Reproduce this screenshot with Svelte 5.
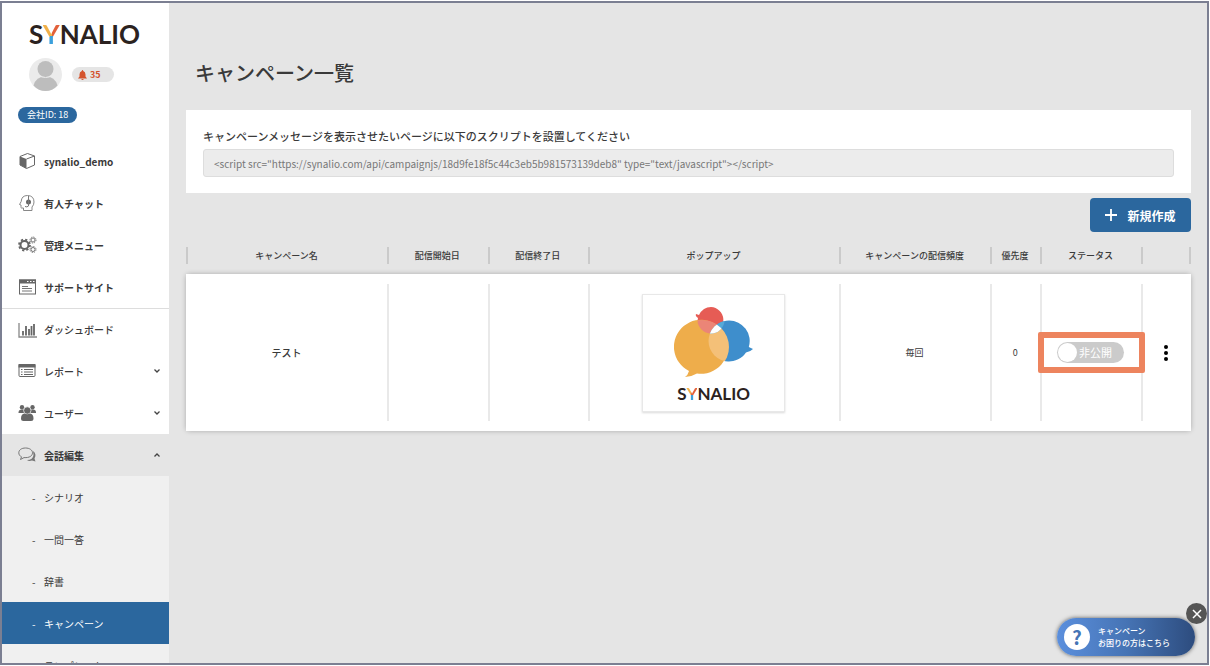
<script>
    const tag = '<script src="https://synalio.com/api/campaignjs/18d9fe18f5c44c3eb5b981573139deb8" type="text/javascript"><\/script>';
    const menu = [
        { icon: "cube", label: "synalio_demo", bold: true },
        { icon: "head", label: "有人チャット", bold: true },
        { icon: "gears", label: "管理メニュー", bold: true },
        { icon: "window", label: "サポートサイト", bold: true },
        { icon: "chart", label: "ダッシュボード", line: true },
        { icon: "list", label: "レポート", arrow: "down" },
        { icon: "users", label: "ユーザー", arrow: "down" },
        { icon: "talk", label: "会話編集", arrow: "up", open: true, bold: true }
    ];
    const submenu = ["シナリオ", "一問一答", "辞書", "キャンペーン", "テンプレート"];
    const current = "キャンペーン";
    const headers = ["キャンペーン名", "配信開始日", "配信終了日", "ポップアップ", "キャンペーンの配信頻度", "優先度", "ステータス", ""];
    let published = $state(false);
    let chatOpen = $state(true);
</script>

{#snippet logo()}
    <span class="logo">S<span class="logoY">Y</span>NALIO</span>
{/snippet}

{#snippet icon(name)}
    <svg class="icon" viewBox="0 0 20 18" aria-hidden="true">
        {#if name == "cube"}
            <path d="M2 4.500 9.500 1.500 16.500 4V13L8.500 16.500 2 13Z" fill="#fff" stroke="#666" />
            <path d="M2 4.500 8.500 7V16.500L2 13Z" fill="#666" />
            <path d="M8.500 7 16.500 4" stroke="#666" fill="none" />
        {:else if name == "head"}
            <path d="M5.500 16.500V14H3.500Q2.700 14 3 12.500V11L1.500 10.500 3.200 7.500Q3.500 1.500 9.500 1.500 16 1.700 16 8 16 11 14 13V16.500Z" fill="none" stroke="#888" />
            <circle cx="10.500" cy="8" r="2.500" fill="#666" />
            <path d="M10.500 2V12Q9 13.500 7 12.500" fill="none" stroke="#777" />
        {:else if name == "gears"}
            <circle cx="6.500" cy="9" r="4" fill="none" stroke="#666" stroke-width="2" />
            <circle cx="6.500" cy="9" r="5.500" fill="none" stroke="#666" stroke-width="1.800" stroke-dasharray="2.200 2.120" />
            <circle cx="15" cy="4" r="2" fill="none" stroke="#777" />
            <circle cx="15" cy="4" r="3" fill="none" stroke="#777" stroke-dasharray="1.300 1.050" />
            <circle cx="15" cy="13.500" r="2" fill="none" stroke="#777" />
            <circle cx="15" cy="13.500" r="3" fill="none" stroke="#777" stroke-dasharray="1.300 1.050" />
        {:else if name == "window"}
            <rect x="1.500" y="2" width="16" height="14" fill="none" stroke="#666" />
            <rect x="1" y="1.500" width="17" height="4" fill="#666" />
            <path d="M9 3.500h1.500M12 3.500h1.500M15 3.500h1.500" stroke="#fff" />
            <path d="M4 8.500h6M4 10.500h10M4 13h10" stroke="#777" />
        {:else if name == "chart"}
            <path d="M1 2V16H19" fill="none" stroke="#888" stroke-width="1.300" />
            <path d="M5 10v4.500M8 5v9.500M11 8v6.500M13.500 5v9.500M16 3v11.500" stroke="#666" stroke-width="1.800" />
        {:else if name == "list"}
            <rect x="1" y="2.500" width="16" height="12" rx="1" fill="none" stroke="#666" />
            <rect x=".5" y="2" width="17" height="3.500" fill="#666" />
            <path d="M3 7.500h1.500M6 7.500h9M3 10h1.500M6 10h9M3 12.500h1.500M6 12.500h9" stroke="#666" />
        {:else if name == "users"}
            <g fill="#666">
                <circle cx="4" cy="3.200" r="2.200" />
                <circle cx="14.500" cy="3.200" r="2.200" />
                <path d="M.5 8.500Q.5 5.500 4 5.500H15Q18 5.500 18 8.500V9H.5Z" />
                <circle cx="9.300" cy="6.500" r="3.700" stroke="#fff" stroke-width=".7" />
                <path d="M3 14.500Q3 10 6.500 9.500 9.300 11 12 9.500 15.500 10 15.500 14.500 15.500 17 13 17H5.500Q3 17 3 14.500Z" />
            </g>
        {:else if name == "talk"}
            <path d="M9 14Q15 14 15.500 9L15 5Q19 8 16.500 12.500L17.500 15.500 14 14.500Q11 15.500 9 14Z" fill="#777" />
            <path d="M7.500 2C3.500 2 .8 4 .8 6.800.8 8.800 2 10.100 3.500 10.800L2.500 13.500 6 11.600C11.500 12 14.500 9.800 14.500 6.800 14.500 4 11.500 2 7.500 2Z" fill="#e5e5e5" stroke="#777" />
        {/if}
    </svg>
{/snippet}

<div class="frame">
    <nav class="side">
        <div class="brand">
            <a class="home" href="#top">{@render logo()}</a>
            <div class="account">
                <svg class="avatar" viewBox="0 0 33 33" role="img" aria-label="avatar">
                    <circle cx="16.500" cy="16.500" r="16.500" fill="#ebebeb" />
                    <circle cx="16.500" cy="11" r="8" fill="#bdbdbd" />
                    <path d="M4.500 27.500Q7 18.500 16.500 18.500T28.500 27.500Q23.500 33 16.500 33T4.500 27.500Z" fill="#bdbdbd" />
                    <path d="M9.500 17.500Q16.500 21.500 23.500 17.500" stroke="#ebebeb" fill="none" />
                </svg>
                <a class="bell" href="#notice">
                    <svg viewBox="0 0 9 10" aria-hidden="true">
                        <path d="M4.500 0Q5.200 0 5.200 1 7.500 1.600 7.500 4.500V6.500L9 8.500H0L1.500 6.500V4.500Q1.500 1.600 3.800 1 3.800 0 4.500 0ZM3.200 9h2.600q-.4 1-1.300 1t-1.300-1Z" fill="#d4532d" />
                    </svg>
                    35
                </a>
            </div>
            <span class="company">会社ID: 18</span>
        </div>
        <ul>
            {#each menu as item}
                <li>
                    <a class="item" class:bold={item.bold} class:line={item.line} class:open={item.open} href="#menu">
                        {@render icon(item.icon)}
                        <span>{item.label}</span>
                        {#if item.arrow}
                            <svg class="arrow" viewBox="0 0 8 8" aria-hidden="true">
                                <path d={item.arrow == "up" ? "M1.500 5.500 4 3 6.500 5.500" : "M1.500 2.500 4 5 6.500 2.500"} />
                            </svg>
                        {/if}
                    </a>
                </li>
            {/each}
            {#each submenu as label}
                <li>
                    <a class="item sub" class:current={label == current} href="#sub"><span class="dash">-</span>{label}</a>
                </li>
            {/each}
        </ul>
    </nav>

    <main>
        <h1>キャンペーン一覧</h1>
        <section class="card">
            <label for="tag">キャンペーンメッセージを表示させたいページに以下のスクリプトを設置してください</label>
            <input id="tag" type="text" readonly value={tag}>
        </section>
        <div class="tools">
            <button class="create">
                <svg viewBox="0 0 12 12" aria-hidden="true"><path d="M6 0V12M0 6H12" stroke="#fff" stroke-width="1.800" /></svg>
                新規作成
            </button>
        </div>
        <table>
            <colgroup>
                <col class="w20"><col class="w10"><col class="w10"><col class="w25">
                <col class="w15"><col class="w5"><col class="w10"><col class="w5">
            </colgroup>
            <thead>
                <tr>
                    {#each headers as header}
                        <th>{header}</th>
                    {/each}
                </tr>
            </thead>
            <tbody>
                <tr>
                    <td class="name">テスト</td>
                    <td></td>
                    <td></td>
                    <td>
                        <div class="popup">
                            <svg viewBox="0 0 80 72" role="img" aria-label="SYNALIO">
                                <defs>
                                    <clipPath id="orange"><circle cx="28" cy="41" r="27" /></clipPath>
                                    <clipPath id="blue"><circle cx="55" cy="35" r="20.500" /></clipPath>
                                </defs>
                                <path d="M22 8 25 9Q29 1 37 1A13 13 0 1 1 24 18Q23 14 24 12Q21 10 22 8Z" fill="#e65c55" />
                                <path d="M55 14.500A20.500 20.500 0 0 1 74.800 41L79 43Q76 46 72 46.500A20.500 20.500 0 1 1 55 14.500Z" fill="#3e8ecc" />
                                <path d="M15 65A27 27 0 1 1 23 67.500Q17 71 11 71Q14 69 15 65Z" fill="#eead4b" />
                                <g clip-path="url(#orange)">
                                    <circle cx="37" cy="14" r="13.500" fill="#eb8577" />
                                    <circle cx="55" cy="35" r="20.500" fill="#f4c078" />
                                </g>
                                <g clip-path="url(#blue)">
                                    <circle cx="37" cy="14" r="13.500" fill="#55a9d8" />
                                    <g clip-path="url(#orange)"><circle cx="37" cy="14" r="13.500" fill="#fff" /></g>
                                </g>
                            </svg>
                            {@render logo()}
                        </div>
                    </td>
                    <td>毎回</td>
                    <td>0</td>
                    <td>
                        <label class="toggle" class:on={published}>
                            <input type="checkbox" bind:checked={published}>
                            <span>{published ? "公開" : "非公開"}</span>
                        </label>
                    </td>
                    <td>
                        <button class="more" aria-label="メニュー">
                            <svg viewBox="0 0 4 16"><circle cx="2" cy="2" r="2" /><circle cx="2" cy="8" r="2" /><circle cx="2" cy="14" r="2" /></svg>
                        </button>
                    </td>
                </tr>
            </tbody>
        </table>
    </main>

    {#if chatOpen}
        <div class="chat">
            <button class="help">
                <span class="mark">?</span>
                <span>キャンペーン<br>お困りの方はこちら</span>
            </button>
            <button class="close" aria-label="閉じる" onclick={() => chatOpen = false}>
                <svg viewBox="0 0 10 10"><path d="M1 1 9 9M9 1 1 9" stroke="#fff" stroke-width="1.500" /></svg>
            </button>
        </div>
    {/if}
</div>

<style>
    :global(body) {
        background: #fff;
    }
    .frame {
        box-sizing: border-box;
        display: flex;
        height: calc(100vh - 2px);
        margin: 1px 1px 1px 0;
        overflow: hidden;
        position: relative;
        border: 2px solid #7b7f92;
        background: #e5e5e5;
        color: #3a3a3a;
        font-family: "Noto Sans CJK JP", sans-serif;
        font-size: 10px;
    }
    button, input {
        font-family: inherit;
    }
    button {
        border: 0;
        cursor: pointer;
    }
    a {
        color: inherit;
        text-decoration: none;
    }
    .logo {
        font-family: Lato, sans-serif;
        font-weight: bold;
        color: #2b2220;
    }
    .logoY {
        color: transparent;
        background: conic-gradient(from 0deg at 50% 55%, #e2603a 0 130deg, #3ba0dc 130deg 230deg, #f0b04a 230deg);
        background-clip: text;
    }

    /* sidebar */
    .side {
        flex: 0 0 167px;
        overflow: hidden;
        background: #fff;
    }
    .brand {
        display: flex;
        flex-direction: column;
        align-items: flex-start;
        box-sizing: border-box;
        height: 137px;
        padding: 14px 16px;
    }
    .home {
        padding-left: 11px;
        font-size: 26px;
        line-height: 32px;
    }
    .account {
        display: flex;
        align-items: center;
        gap: 10px;
        padding: 8px 11px 16px;
    }
    .avatar {
        width: 33px;
        height: 33px;
    }
    .bell {
        display: flex;
        align-items: center;
        gap: 3px;
        box-sizing: border-box;
        width: 42px;
        height: 15px;
        padding-left: 6px;
        border-radius: 8px;
        background: #e5e5e5;
        color: #d4532d;
        font-size: 9px;
        font-weight: bold;
    }
    .bell svg {
        width: 9px;
        height: 10px;
    }
    .company {
        padding: 0 9px;
        border-radius: 8px;
        background: #2b679e;
        color: #fff;
        font-size: 9px;
        line-height: 16px;
    }
    ul {
        margin: 0;
        padding: 0;
        list-style-type: none;
    }
    .item {
        display: flex;
        align-items: center;
        gap: 6px;
        box-sizing: border-box;
        height: 42px;
        padding: 0 8px 0 16px;
        font-weight: 500;
    }
    .bold {
        font-weight: bold;
    }
    .line {
        border-top: 1px solid #ddd;
    }
    .open {
        background: #e5e5e5;
    }
    .icon {
        width: 20px;
        height: 18px;
    }
    .arrow {
        width: 8px;
        height: 8px;
        margin-left: auto;
        fill: none;
        stroke: #444;
        stroke-width: 1.3;
    }
    .sub {
        padding-left: 30px;
        background: #f0f0f0;
        font-weight: normal;
    }
    .dash {
        width: 6px;
    }
    .current {
        background: #2b679e;
        color: #fff;
    }

    /* content */
    main {
        flex: 1;
        min-width: 0;
        padding: 55px 16px 0 17px;
    }
    h1 {
        margin: 0 0 22px 9px;
        font-size: 20px;
        font-weight: 500;
        line-height: 30px;
    }
    .card {
        padding: 16px 17px;
        background: #fff;
    }
    .card label {
        display: block;
        font-size: 11px;
        font-weight: 500;
        line-height: 20px;
    }
    .card input {
        box-sizing: border-box;
        width: 100%;
        height: 28px;
        margin-top: 3px;
        padding: 0 10px;
        border: 1px solid #ddd;
        border-radius: 3px;
        background: #ececec;
        color: #777;
        font-size: 10px;
    }
    .tools {
        display: flex;
        justify-content: flex-end;
        padding: 5px 0 5px;
    }
    .create {
        display: flex;
        align-items: center;
        justify-content: center;
        gap: 10px;
        width: 101px;
        height: 34px;
        border-radius: 4px;
        background: #2b679e;
        color: #fff;
        font-size: 12px;
        font-weight: bold;
    }
    .create svg {
        width: 12px;
        height: 12px;
    }
    table {
        width: 100%;
        table-layout: fixed;
        border-spacing: 0;
        text-align: center;
    }
    .w5 { width: 5%; }
    .w10 { width: 10%; }
    .w15 { width: 15%; }
    .w20 { width: 20%; }
    .w25 { width: 25%; }
    th, td {
        padding: 0;
        background: linear-gradient(#e9e9e9, #e9e9e9) left center / 2px calc(100% - 20px) no-repeat;
    }
    th {
        height: 37px;
        background-image: linear-gradient(#cacaca, #cacaca);
        background-size: 2px 17px;
        font-size: 9px;
        font-weight: 500;
        white-space: nowrap;
    }
    th:last-child {
        background-image: linear-gradient(#cacaca, #cacaca), linear-gradient(#cacaca, #cacaca);
        background-position: left center, right center;
    }
    td {
        height: 157px;
        font-size: 9px;
    }
    td:first-child {
        background-image: none;
    }
    tbody tr {
        border-radius: 4px;
        background: #fff;
        box-shadow: 0 0 5px rgba(0, 0, 0, 0.25);
    }
    .name {
        font-size: 10px;
        font-weight: 500;
    }
    .popup {
        display: flex;
        flex-direction: column;
        align-items: center;
        gap: 6px;
        box-sizing: border-box;
        width: 143px;
        height: 118px;
        margin: 0 auto;
        padding-top: 11px;
        border: 1px solid #e8e8e8;
        box-shadow: 0 1px 2px rgba(0, 0, 0, 0.15);
        font-size: 17px;
        line-height: 20px;
    }
    .popup svg {
        width: 80px;
        height: 72px;
    }
    .toggle {
        display: inline-flex;
        align-items: center;
        gap: 2px;
        position: relative;
        box-sizing: border-box;
        width: 67px;
        height: 21px;
        padding: 1px;
        border-radius: 11px;
        background: #cbcbcb;
        color: #fff;
        font-size: 11px;
        line-height: 19px;
        vertical-align: middle;
    }
    .toggle.on {
        flex-direction: row-reverse;
        background: #2b679e;
    }
    .toggle input {
        appearance: none;
        width: 19px;
        height: 19px;
        margin: 0;
        border-radius: 50%;
        background: #fff;
    }
    .toggle::after {
        content: "";
        position: absolute;
        inset: -10px -21px -10px -19px;
        border: 6px solid #ed845e;
        border-radius: 2px;
        pointer-events: none;
    }
    .more {
        padding: 0;
        background: none;
        vertical-align: middle;
    }
    .more svg {
        display: block;
        width: 4px;
        height: 16px;
    }

    /* chat bubble lies over the page */
    .chat {
        position: absolute;
        right: 12px;
        bottom: 7px;
    }
    .help {
        display: flex;
        align-items: center;
        gap: 8px;
        width: 138px;
        height: 38px;
        padding: 0 7px;
        border-radius: 19px;
        background: linear-gradient(90deg, #5b8fdd, #4674b5 50%, #2d4c7e);
        box-shadow: 0 0 4px rgba(0, 0, 0, 0.6);
        color: #fff;
        font-size: 8px;
        font-weight: 500;
        line-height: 12px;
        text-align: left;
        white-space: nowrap;
    }
    .mark {
        flex: none;
        width: 26px;
        border-radius: 50%;
        background: #fff;
        color: #4674b5;
        font-size: 19px;
        font-weight: bold;
        line-height: 26px;
        text-align: center;
    }
    .close {
        display: flex;
        align-items: center;
        justify-content: center;
        position: absolute;
        top: -15px;
        right: -12px;
        width: 21px;
        height: 21px;
        padding: 0;
        border-radius: 50%;
        background: #555;
    }
    .close svg {
        width: 10px;
        height: 10px;
    }
</style>
